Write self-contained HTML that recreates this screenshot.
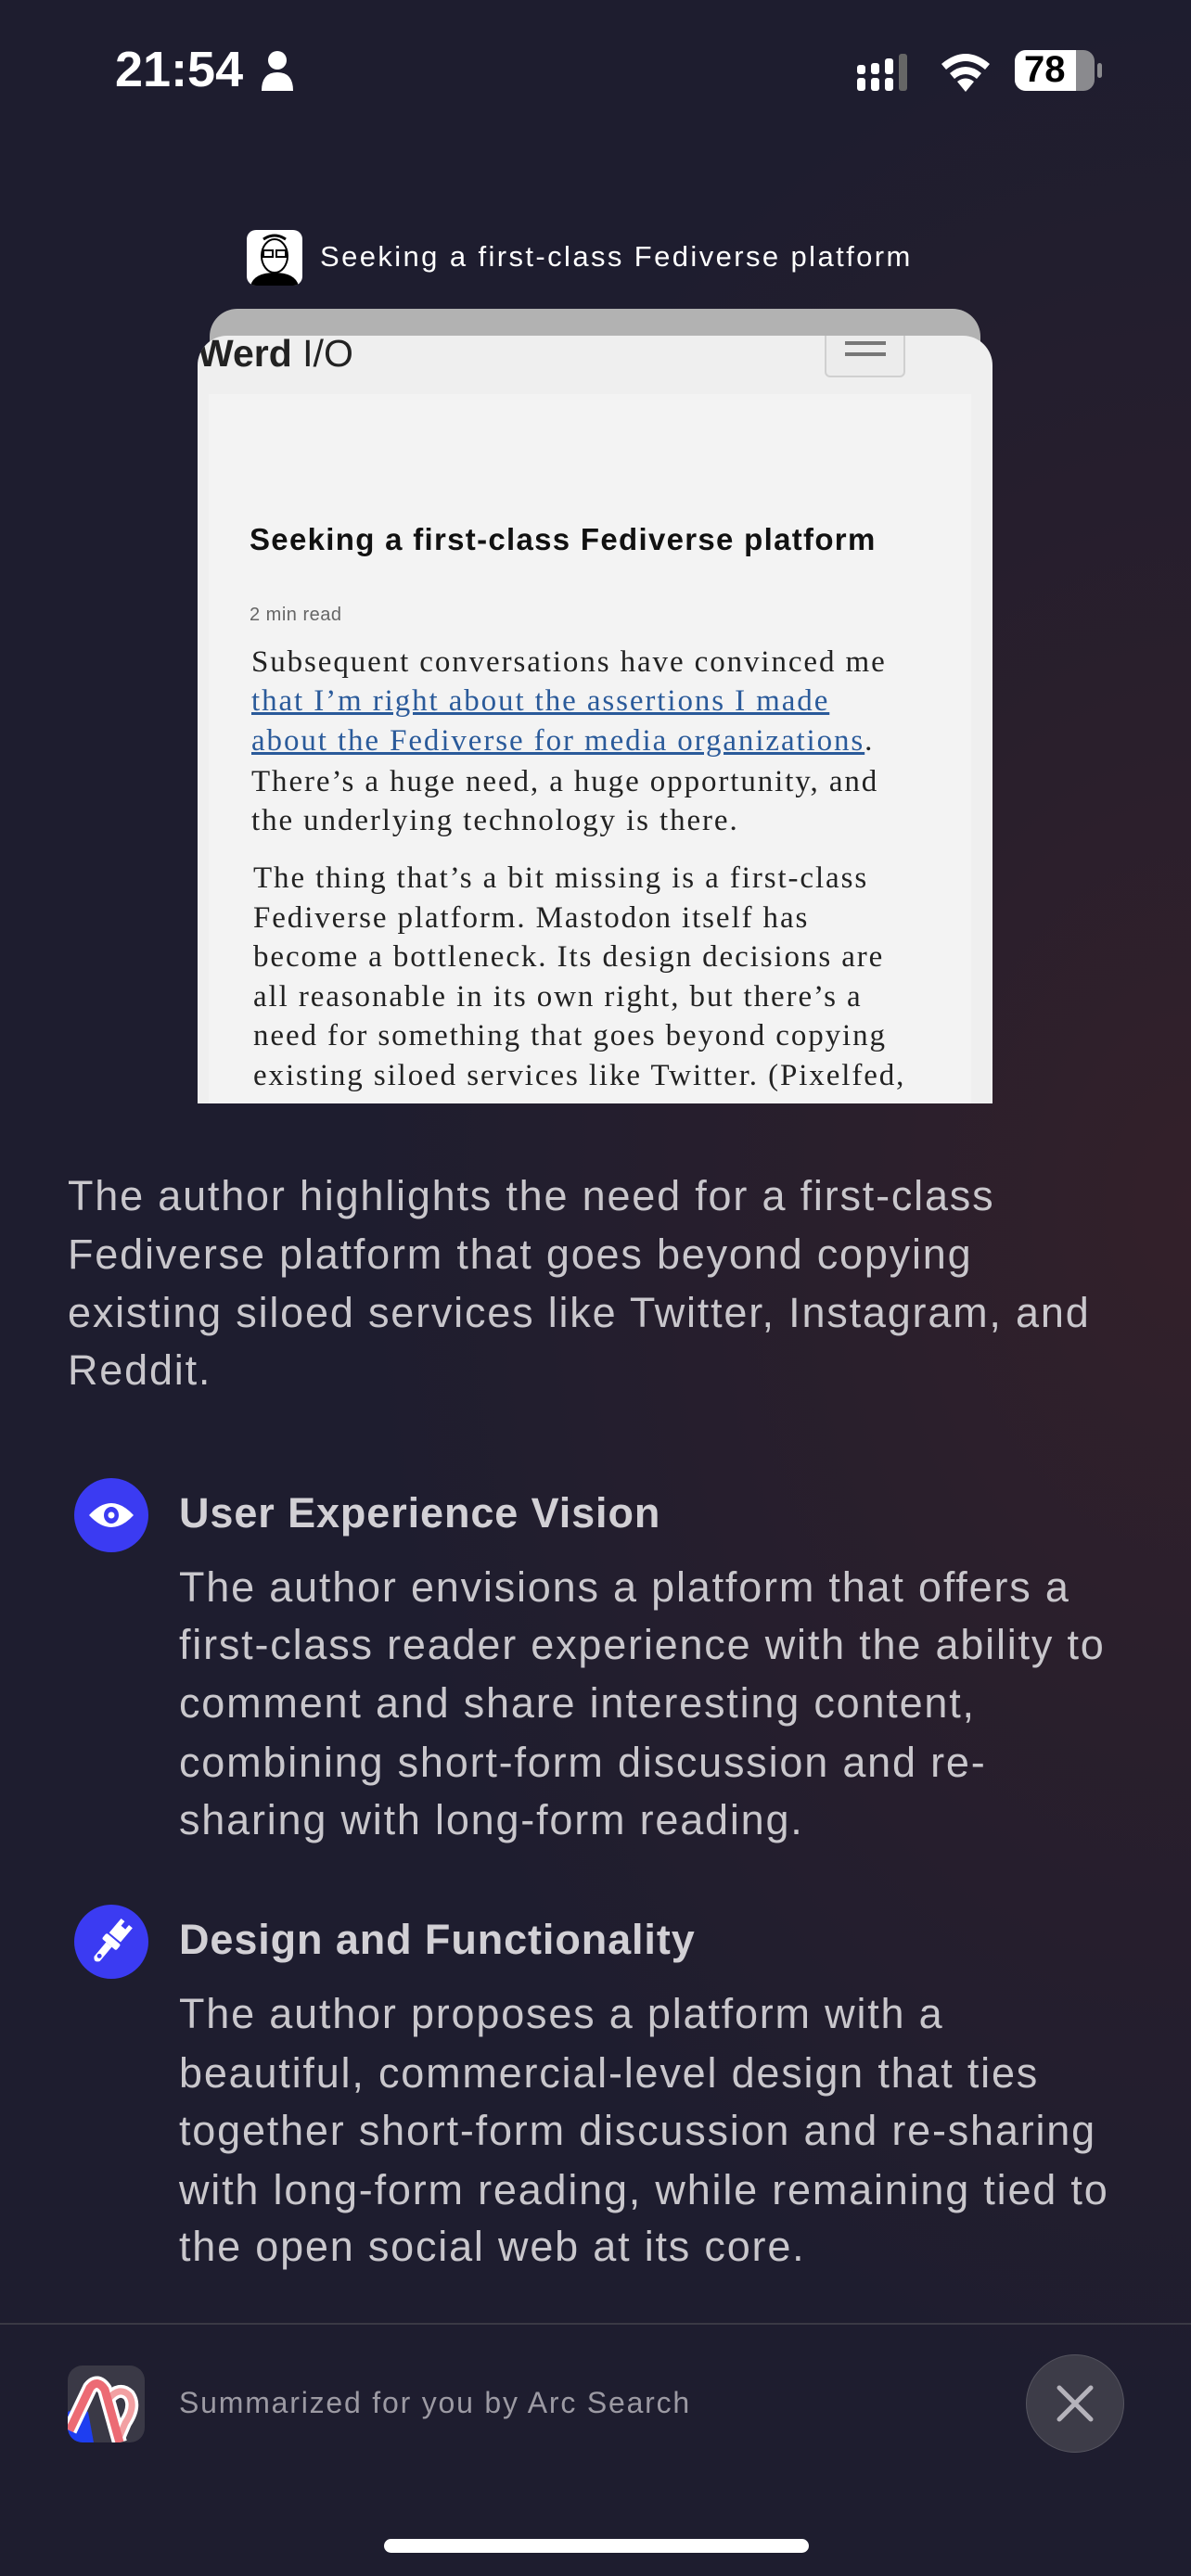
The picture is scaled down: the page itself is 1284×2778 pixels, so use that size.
<!DOCTYPE html>
<html><head><meta charset="utf-8"><style>
*{margin:0;padding:0;box-sizing:border-box}
html,body{width:1284px;height:2778px;overflow:hidden}
body{position:relative;font-family:"Liberation Sans",sans-serif;
background:radial-gradient(ellipse 900px 1300px at 1284px 1300px,#33202a 0%,#2a1f2c 40%,rgba(30,29,46,0) 100%),#1e1d2f;}
.abs{position:absolute}
.t{white-space:nowrap}
.sum{left:73px;color:#c9c7cc;font-size:45px;letter-spacing:1.8px}
.h{left:193px;color:#d2d0d5;font-size:45px;font-weight:bold;letter-spacing:0.9px}
.b{left:193px;color:#c9c7cc;font-size:45px;letter-spacing:1.8px}
.ser{font-family:"Liberation Serif",serif;font-size:33px;color:#222;letter-spacing:1.9px;left:271px}
.ico{width:80px;height:80px;border-radius:50%;background:#3b3bf2;left:80px}
</style></head><body>
<!-- status bar -->
<div class="abs t" style="left:124px;top:44px;font-size:54px;font-weight:bold;color:#fff;letter-spacing:0px">21:54</div>
<svg class="abs" style="left:280px;top:54px" width="38" height="44" viewBox="0 0 38 44"><circle cx="19" cy="11" r="10" fill="#fff"/><path d="M2 44 Q2 24 19 24 Q36 24 36 44Z" fill="#fff"/></svg>
<svg class="abs" style="left:924px;top:58px" width="66" height="40" viewBox="0 0 66 40">
<rect x="0" y="26" width="9" height="14" rx="3" fill="#fff"/><rect x="0" y="12" width="9" height="10" rx="3" fill="#fff"/>
<rect x="15" y="26" width="9" height="14" rx="3" fill="#fff"/><rect x="15" y="10" width="9" height="12" rx="3" fill="#fff"/>
<rect x="30" y="26" width="9" height="14" rx="3" fill="#fff"/><rect x="30" y="5" width="9" height="17" rx="3" fill="#fff"/>
<rect x="45" y="0" width="9" height="40" rx="3" fill="#666"/></svg>
<svg class="abs" style="left:1012px;top:55px" width="58" height="46" viewBox="0 0 58 46"><path d="M29 44 L20 33 Q29 26 38 33Z M12 24 Q29 10 46 24 L41 30 Q29 20 17 30Z M3 14 Q29 -8 55 14 L50 20 Q29 2 8 20Z" fill="#fff"/></svg>
<div class="abs" style="left:1094px;top:54px;width:86px;height:44px;border-radius:12px;background:#8a8a8e;overflow:hidden"><div style="width:66px;height:44px;background:#fff"></div></div>
<div class="abs" style="left:1183px;top:68px;width:5px;height:16px;border-radius:3px;background:#8a8a8e"></div>
<div class="abs t" style="left:1104px;top:53px;font-size:40px;font-weight:bold;color:#000">78</div>
<!-- tab title -->
<div class="abs" style="left:266px;top:248px;width:60px;height:60px;border-radius:10px;background:#fff;overflow:hidden">
<svg width="60" height="60" viewBox="0 0 60 60"><ellipse cx="30" cy="28" rx="14" ry="18" fill="none" stroke="#000" stroke-width="2"/><rect x="18" y="22" width="10" height="7" fill="none" stroke="#000" stroke-width="2"/><rect x="32" y="22" width="10" height="7" fill="none" stroke="#000" stroke-width="2"/><path d="M4 60 Q8 46 30 46 Q52 46 56 60Z" fill="#000"/><path d="M18 10 Q30 2 42 10" stroke="#000" stroke-width="3" fill="none"/></svg></div>
<div class="abs t" style="left:345px;top:259px;font-size:31px;color:#fff;letter-spacing:2.4px">Seeking a first-class Fediverse platform</div>
<!-- card -->
<div class="abs" style="left:226px;top:333px;width:831px;height:80px;border-radius:30px 30px 0 0;background:#b2b2b2"></div>
<div class="abs" style="left:213px;top:362px;width:857px;height:828px;border-radius:32px 32px 0 0;background:#efefef;overflow:hidden">
 <div class="abs" style="left:12px;top:63px;width:822px;height:770px;background:#f3f3f3"></div>
 <div class="abs t" style="left:0px;top:-4px;font-size:41px;color:#222"><b>Werd</b> I/O</div>
 <div class="abs" style="left:676px;top:-8px;width:87px;height:53px;border:2px solid #d0d0d0;border-radius:6px;background:#ececec"></div>
 <div class="abs" style="left:698px;top:6px;width:44px;height:4px;background:#777;box-shadow:0 12px 0 #777,0 -12px 0 #777"></div>
</div>
<div class="abs t" style="left:269px;top:563px;font-size:33px;font-weight:bold;color:#111;letter-spacing:1.3px">Seeking a first-class Fediverse platform</div>
<div class="abs t" style="left:269px;top:652px;font-size:20px;color:#666;letter-spacing:0.5px">2 min read</div>
<div class="abs t ser" style="top:696px">Subsequent conversations have convinced me</div>
<div class="abs t ser" style="top:738px;color:#2a5a9a;text-decoration:underline">that I’m right about the assertions I made</div>
<div class="abs t ser" style="top:781px"><span style="color:#2a5a9a;text-decoration:underline">about the Fediverse for media organizations</span>.</div>
<div class="abs t ser" style="top:825px">There’s a huge need, a huge opportunity, and</div>
<div class="abs t ser" style="top:867px">the underlying technology is there.</div>
<div class="abs t ser" style="top:929px;left:273px">The thing that’s a bit missing is a first-class</div>
<div class="abs t ser" style="top:972px;left:273px">Fediverse platform. Mastodon itself has</div>
<div class="abs t ser" style="top:1014px;left:273px">become a bottleneck. Its design decisions are</div>
<div class="abs t ser" style="top:1057px;left:273px">all reasonable in its own right, but there’s a</div>
<div class="abs t ser" style="top:1099px;left:273px">need for something that goes beyond copying</div>
<div class="abs t ser" style="top:1142px;left:273px">existing siloed services like Twitter. (Pixelfed,</div>
<!-- summary -->
<div class="abs t sum" style="top:1264px">The author highlights the need for a first-class</div>
<div class="abs t sum" style="top:1327px">Fediverse platform that goes beyond copying</div>
<div class="abs t sum" style="top:1390px">existing siloed services like Twitter, Instagram, and</div>
<div class="abs t sum" style="top:1452px">Reddit.</div>
<div class="abs ico" style="top:1594px"><svg width="80" height="80" viewBox="0 0 80 80"><path d="M16 40 Q40 14 64 40 Q40 66 16 40Z" fill="#fff"/><ellipse cx="40" cy="40" rx="8" ry="9" fill="#3b3bf2"/><circle cx="40" cy="40" r="3.5" fill="#fff"/></svg></div>
<div class="abs t h" style="top:1606px">User Experience Vision</div>
<div class="abs t b" style="top:1686px">The author envisions a platform that offers a</div>
<div class="abs t b" style="top:1748px">first-class reader experience with the ability to</div>
<div class="abs t b" style="top:1811px">comment and share interesting content,</div>
<div class="abs t b" style="top:1875px">combining short-form discussion and re-</div>
<div class="abs t b" style="top:1937px">sharing with long-form reading.</div>
<div class="abs ico" style="top:2054px"><svg width="80" height="80" viewBox="0 0 80 80"><g transform="rotate(40 40 40)"><path d="M32 14 H37 V20 H43 V14 H48 V34 H32Z" fill="#fff"/><rect x="30" y="36" width="20" height="8" rx="2" fill="#fff"/><path d="M36 44 H44 V64 Q40 70 36 64Z" fill="#fff"/><circle cx="40" cy="60" r="2.5" fill="#3b3bf2"/></g></svg></div>
<div class="abs t h" style="top:2066px">Design and Functionality</div>
<div class="abs t b" style="top:2146px">The author proposes a platform with a</div>
<div class="abs t b" style="top:2210px">beautiful, commercial-level design that ties</div>
<div class="abs t b" style="top:2272px">together short-form discussion and re-sharing</div>
<div class="abs t b" style="top:2336px">with long-form reading, while remaining tied to</div>
<div class="abs t b" style="top:2397px">the open social web at its core.</div>
<!-- footer -->
<div class="abs" style="left:0;top:2505px;width:1284px;height:2px;background:#3a3944"></div>
<div class="abs" style="left:73px;top:2551px;width:83px;height:83px;border-radius:16px;background:#3a3946;overflow:hidden">
<svg width="83" height="83" viewBox="0 0 83 83"><path d="M0 50 Q10 44 22 50 L28 83 H0Z" fill="#1e3ef0"/><path d="M2 70 L24 24 Q32 14 40 26 L56 83" fill="none" stroke="#fff" stroke-width="16" stroke-linejoin="round"/><path d="M44 36 Q56 22 66 32 Q74 44 62 62 L56 76" fill="none" stroke="#fff" stroke-width="14"/><path d="M44 36 Q56 22 66 32 Q74 44 62 62 L56 76" fill="none" stroke="#f2a0a2" stroke-width="7"/><path d="M2 70 L24 24 Q32 14 40 26 L56 83" fill="none" stroke="#ec6b74" stroke-width="9" stroke-linejoin="round"/></svg></div>
<div class="abs t" style="left:193px;top:2573px;font-size:32px;color:#9c9aa3;letter-spacing:1.8px">Summarized for you by Arc Search</div>
<div class="abs" style="left:1106px;top:2539px;width:106px;height:106px;border-radius:50%;background:#3d3c48;border:1px solid #55545f"></div>
<svg class="abs" style="left:1138px;top:2571px" width="42" height="42" viewBox="0 0 42 42"><path d="M4 4 L38 38 M38 4 L4 38" stroke="#b5b3bb" stroke-width="5" stroke-linecap="round"/></svg>
<div class="abs" style="left:414px;top:2738px;width:458px;height:15px;border-radius:8px;background:#fff"></div>
</body></html>
